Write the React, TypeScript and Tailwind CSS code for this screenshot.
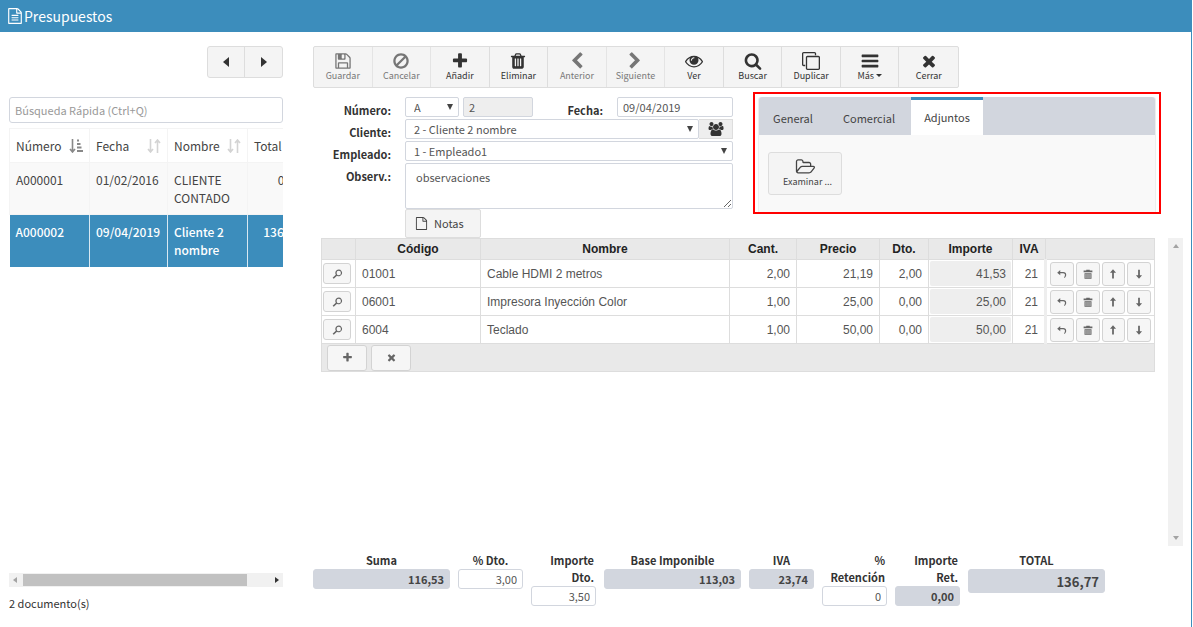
import type { ReactNode } from "react";

const paths = {
  save: "M512 1536h768v-384h-768v384zm896 0h128v-896q0-14-10-38.500t-20-34.500l-281-281q-10-10-34-20t-39-10v416q0 40-28 68t-68 28h-576q-40 0-68-28t-28-68v-416h-128v1280h128v-416q0-40 28-68t68-28h832q40 0 68 28t28 68v416zm-384-928v-320q0-13-9.500-22.500t-22.500-9.500h-192q-13 0-22.500 9.500t-9.500 22.500v320q0 13 9.500 22.500t22.500 9.500h192q13 0 22.500-9.500t9.500-22.500zm640 32v928q0 40-28 68t-68 28h-1344q-40 0-68-28t-28-68v-1344q0-40 28-68t68-28h928q40 0 88 20t76 48l280 280q28 28 48 76t20 88z",
  ban: "M1440 893q0-161-87-295l-754 753q137 89 297 89 111 0 211.500-43.500t173.500-116.500 116-174.500 43-212.500zm-999 299l755-754q-135-91-300-91-148 0-273 73t-198 199-73 274q0 162 89 299zm1223-299q0 157-61 300t-163.500 246-245 164-298.500 61-298.500-61-245-164-163.500-246-61-300 61-299.500 163.500-245.500 245-164 298.500-61 298.500 61 245 164 163.500 245.500 61 299.500z",
  plus: "M1600 736v192q0 40-28 68t-68 28h-416v416q0 40-28 68t-68 28h-192q-40 0-68-28t-28-68v-416h-416q-40 0-68-28t-28-68v-192q0-40 28-68t68-28h416v-416q0-40 28-68t68-28h192q40 0 68 28t28 68v416h416q40 0 68 28t28 68z",
  trash: "M704 1376v-704q0-14-9-23t-23-9h-64q-14 0-23 9t-9 23v704q0 14 9 23t23 9h64q14 0 23-9t9-23zm256 0v-704q0-14-9-23t-23-9h-64q-14 0-23 9t-9 23v704q0 14 9 23t23 9h64q14 0 23-9t9-23zm256 0v-704q0-14-9-23t-23-9h-64q-14 0-23 9t-9 23v704q0 14 9 23t23 9h64q14 0 23-9t9-23zm-544-992h448l-48-117q-7-9-17-11h-317q-10 2-17 11zm928 32v64q0 14-9 23t-23 9h-96v948q0 83-47 143.500t-113 60.500h-832q-66 0-113-58.500t-47-141.500v-952h-96q-14 0-23-9t-9-23v-64q0-14 9-23t23-9h309l70-167q15-37 54-63t79-26h320q40 0 79 26t54 63l70 167h309q14 0 23 9t9 23z",
  prev: "M1427 301l-531 531 531 531q19 19 19 45t-19 45l-166 166q-19 19-45 19t-45-19l-742-742q-19-19-19-45t19-45l742-742q19-19 45-19t45 19l166 166q19 19 19 45t-19 45z",
  next: "M1363 877l-742 742q-19 19-45 19t-45-19l-166-166q-19-19-19-45t19-45l531-531-531-531q-19-19-19-45t19-45l166-166q19-19 45-19t45 19l742 742q19 19 19 45t-19 45z",
  eye: "M1664 960q-152-236-381-353 61 104 61 225 0 185-131.500 316.500t-316.500 131.500-316.500-131.500-131.500-316.500q0-121 61-225-229 117-381 353 133 205 333.500 326.500t434.500 121.500 434.500-121.500 333.500-326.500zm-720-384q0-20-14-34t-34-14q-125 0-214.500 89.500t-89.500 214.500q0 20 14 34t34 14 34-14 14-34q0-86 61-147t147-61q20 0 34-14t14-34zm848 384q0 34-20 69-140 230-376.500 368.500t-499.500 138.500-499.500-139-376.500-368q-20-35-20-69t20-69q140-229 376.500-368t499.500-139 499.500 139 376.500 368q20 35 20 69z",
  search: "M1216 832q0-185-131.500-316.500t-316.500-131.500-316.500 131.500-131.500 316.500 131.500 316.500 316.500 131.500 316.500-131.500 131.500-316.500zm512 832q0 52-38 90t-90 38q-54 0-90-38l-343-342q-179 124-399 124-143 0-273.500-55.500t-225-150-150-225-55.500-273.500 55.500-273.500 150-225 225-150 273.500-55.500 273.500 55.500 225 150 150 225 55.500 273.500q0 220-124 399l343 343q37 37 37 90z",
  clone: "M1664 1632v-1088q0-13-9.500-22.500t-22.500-9.500h-1088q-13 0-22.500 9.500t-9.500 22.500v1088q0 13 9.500 22.500t22.500 9.500h1088q13 0 22.500-9.500t9.500-22.500zm128-1088v1088q0 66-47 113t-113 47h-1088q-66 0-113-47t-47-113v-1088q0-66 47-113t113-47h1088q66 0 113 47t47 113zm-384-384v160h-128v-160q0-13-9.500-22.500t-22.500-9.500h-1088q-13 0-22.500 9.500t-9.500 22.500v1088q0 13 9.500 22.500t22.500 9.500h160v128h-160q-66 0-113-47t-47-113v-1088q0-66 47-113t113-47h1088q66 0 113 47t47 113z",
  bars: "M1728 1344v128q0 26-19 45t-45 19h-1536q-26 0-45-19t-19-45v-128q0-26 19-45t45-19h1536q26 0 45 19t19 45zm0-512v128q0 26-19 45t-45 19h-1536q-26 0-45-19t-19-45v-128q0-26 19-45t45-19h1536q26 0 45 19t19 45zm0-512v128q0 26-19 45t-45 19h-1536q-26 0-45-19t-19-45v-128q0-26 19-45t45-19h1536q26 0 45 19t19 45z",
  times: "M1490 1322q0 40-28 68l-136 136q-28 28-68 28t-68-28l-294-294-294 294q-28 28-68 28t-68-28l-136-136q-28-28-28-68t28-68l294-294-294-294q-28-28-28-68t28-68l136-136q28-28 68-28t68 28l294 294 294-294q28-28 68-28t68 28l136 136q28 28 28 68t-28 68l-294 294 294 294q28 28 28 68z",
  folder: "M1845 931q0-35-53-35h-1088q-40 0-85.500 21.500t-71.500 52.500l-294 363q-18 24-18 40 0 35 53 35h1088q40 0 86-22t71-53l294-363q18-22 18-39zm-1141-163h768v-160q0-40-28-68t-68-28h-576q-40 0-68-28t-28-68v-64q0-40-28-68t-68-28h-320q-40 0-68 28t-28 68v853l256-315q44-53 116-87.500t140-34.500zm1269 163q0 62-46 120l-295 363q-43 53-116 87.500t-140 34.500h-1088q-92 0-158-66t-66-158v-960q0-92 66-158t158-66h320q92 0 158 66t66 158v32h544q92 0 158 66t66 158v160h192q54 0 99 24.500t67 70.500q15 32 15 68z",
  users: "M657 896q-162 5-265 128h-134q-82 0-138-40.500t-56-118.500q0-353 124-353 6 0 43.500 21t97.500 42.500 119 21.500q67 0 133-23-5 37-5 66 0 159 93 293zm1071 637q0 120-73 189.500t-194 69.500h-874q-121 0-194-69.500t-73-189.500q0-53 3.500-103.500t14-109 26.500-108.500 43-97.500 62-81 85.500-53.500 111.500-20q10 0 43 21.500t73 48 107 48 135 21.500 135-21.500 107-48 73-48 43-21.500q61 0 111.500 20t85.500 53.500 62 81 43 97.500 26.500 108.500 14 109 3.500 103.500zm-1024-1277q0 106-75 181t-181 75-181-75-75-181 75-181 181-75 181 75 75 181zm704 384q0 159-112.500 271.500t-271.500 112.500-271.500-112.500-112.500-271.500 112.500-271.500 271.500-112.500 271.500 112.500 112.500 271.500zm576 225q0 78-56 118.500t-138 40.500h-134q-103-123-265-128 93-134 93-293 0-29-5-66 66 23 133 23 59 0 119-21.500t97.500-42.500 43.500-21q124 0 124 353zm-128-609q0 106-75 181t-181 75-181-75-75-181 75-181 181-75 181 75 75 181z",
  file: "M1596 380q28 28 48 76t20 88v1152q0 40-28 68t-68 28h-1344q-40 0-68-28t-28-68v-1600q0-40 28-68t68-28h896q40 0 88 20t76 48zm-444-244v376h376q-10-29-22-41l-313-313q-12-12-41-22zm384 1528v-1024h-416q-40 0-68-28t-28-68v-416h-768v1536h1280z",
  fileText:
    "M1596 380q28 28 48 76t20 88v1152q0 40-28 68t-68 28h-1344q-40 0-68-28t-28-68v-1600q0-40 28-68t68-28h896q40 0 88 20t76 48zm-444-244v376h376q-10-29-22-41l-313-313q-12-12-41-22zm384 1528v-1024h-416q-40 0-68-28t-28-68v-416h-768v1536h1280zm-1024-864q0-14 9-23t23-9h704q14 0 23 9t9 23v64q0 14-9 23t-23 9h-704q-14 0-23-9t-9-23v-64zm736 224q14 0 23 9t9 23v64q0 14-9 23t-23 9h-704q-14 0-23-9t-9-23v-64q0-14 9-23t23-9h704zm0 256q14 0 23 9t9 23v64q0 14-9 23t-23 9h-704q-14 0-23-9t-9-23v-64q0-14 9-23t23-9h704z",
};

type IconName = keyof typeof paths;

function Icon({ name, className }: { name: IconName; className: string }) {
  const wide = name === "folder" || name === "users";
  return (
    <svg viewBox={wide ? "0 0 2048 1792" : "0 0 1792 1792"} fill="currentColor" className={className} aria-hidden="true">
      <path d={paths[name]} />
    </svg>
  );
}

// Small glyphs of the lines grid, drawn on a 16px box
const gridPaths = {
  lookup: "M10 3a3.800 3.800 0 1 1-2 7L4.300 13.500 3 12.200l3.600-3.400A3.800 3.800 0 0 1 10 3zm0 1.300a2.500 2.500 0 1 0 0 5 2.500 2.500 0 0 0 0-5z",
  undo: "M6 3.500v2.300h3.500c2.200 0 3.300 1.300 3.300 3 0 1.400-.7 2.600-1.800 3.700l-.6-.6c.7-1 1-1.900 1-2.700 0-1.200-.7-2-2-2H6V9.500l-3.500-3z",
  trash: "M6 3h4v1h3v2H3V4h3zM4 7h8v6.500H4zM5.300 8v4.500h.8V8zm2.300 0v4.500h.8V8zm2.300 0v4.500h.8V8z",
  up: "M8 2.500l3.500 4H9V13H7V6.500H4.500z",
  down: "M8 13.500l-3.500-4H7V3h2v6.500h2.500z",
};

function GridButton({ icon, label, className }: { icon: keyof typeof gridPaths; label: string; className: string }) {
  return (
    <button
      type="button"
      aria-label={label}
      className={`flex items-center justify-center rounded-[3px] border border-[#d3d3d3] bg-[#f6f6f6] text-[#666] ${className}`}
    >
      <svg viewBox="0 0 16 16" fill="currentColor" fillRule="evenodd" className="size-[14px]">
        <path d={gridPaths[icon]} />
      </svg>
    </button>
  );
}

function SortIcon({ sorted = false }: { sorted?: boolean }) {
  return (
    <svg viewBox="0 0 14 14" fill="none" stroke="currentColor" className={`size-[14px] ${sorted ? "text-[#888]" : "text-[#d3d3d3]"}`}>
      <path d="M3.500 0v12M1 10l2.500 3L6 10" strokeWidth="1.600" />
      {sorted ? (
        <path d="M8 1.500h2M8 5h3.500M8 8.500h4.500M8 12h6" strokeWidth="2" />
      ) : (
        <path d="M10.500 14V2M8 4l2.500-3L13 4" strokeWidth="1.600" />
      )}
    </svg>
  );
}

const toolbar: { label: string; icon: IconName; disabled?: boolean; menu?: boolean }[] = [
  { label: "Guardar", icon: "save", disabled: true },
  { label: "Cancelar", icon: "ban", disabled: true },
  { label: "Añadir", icon: "plus" },
  { label: "Eliminar", icon: "trash" },
  { label: "Anterior", icon: "prev", disabled: true },
  { label: "Siguiente", icon: "next", disabled: true },
  { label: "Ver", icon: "eye" },
  { label: "Buscar", icon: "search" },
  { label: "Duplicar", icon: "clone" },
  { label: "Más", icon: "bars", menu: true },
  { label: "Cerrar", icon: "times" },
];

const lines = [
  { codigo: "01001", nombre: "Cable HDMI 2 metros", cant: "2,00", precio: "21,19", dto: "2,00", importe: "41,53" },
  { codigo: "06001", nombre: "Impresora Inyección Color", cant: "1,00", precio: "25,00", dto: "0,00", importe: "25,00" },
  { codigo: "6004", nombre: "Teclado", cant: "1,00", precio: "50,00", dto: "0,00", importe: "50,00" },
];

const totals = [
  { id: "suma", label: "Suma", value: "116,53", wide: true, locked: true },
  { id: "pdto", label: "% Dto.", value: "3,00" },
  { id: "idto", label: "Importe Dto.", value: "3,50", wrap: true },
  { id: "base", label: "Base Imponible", value: "113,03", wide: true, locked: true },
  { id: "iva", label: "IVA", value: "23,74", locked: true },
  { id: "pret", label: "% Retención", value: "0", wrap: true },
  { id: "iret", label: "Importe Ret.", value: "0,00", locked: true, wrap: true },
  { id: "total", label: "TOTAL", value: "136,77", wide: true, locked: true, big: true },
];

function Label({ htmlFor, children }: { htmlFor: string; children: ReactNode }) {
  return (
    <label htmlFor={htmlFor} className="h-5 pt-[3px] text-right font-bold leading-5 text-[#333]">
      {children}
    </label>
  );
}

function SelectBox({ id, value, className }: { id: string; value: string; className: string }) {
  return (
    <div className={`relative h-5 ${className}`}>
      <select id={id} className="h-5 w-full appearance-none rounded-[2px] border border-[#d2d6de] bg-white px-2 leading-4">
        <option>{value}</option>
      </select>
      <svg viewBox="0 0 6 6" className="pointer-events-none absolute right-[6px] top-[7px] size-[6px] fill-[#444]">
        <path d="M0 0h6L3 6z" />
      </svg>
    </div>
  );
}

function Sidebar() {
  const cell = "border border-[#f4f4f4] px-[6px] pb-[6px] pt-2";
  const selected = "border-r border-[#d8e8f2] px-[6px] pb-[6px] pt-2";
  return (
    <aside className="flex w-[274px] shrink-0 flex-col">
      <div className="flex self-end rounded-[3px] border border-[#ddd] bg-[#f4f4f4]">
        <button type="button" aria-label="Página anterior" className="flex h-[30px] w-[37px] items-center justify-center border-r border-[#ddd]">
          <svg viewBox="0 0 6 10" className="h-[10px] w-[6px] fill-[#333]"><path d="M6 0v10L0 5z" /></svg>
        </button>
        <button type="button" aria-label="Página siguiente" className="flex h-[30px] w-[37px] items-center justify-center">
          <svg viewBox="0 0 6 10" className="h-[10px] w-[6px] fill-[#333]"><path d="M0 0v10l6-5z" /></svg>
        </button>
      </div>

      <input
        type="text"
        aria-label="Búsqueda Rápida"
        placeholder="Búsqueda Rápida (Ctrl+Q)"
        className="mt-[19px] h-[26px] rounded-[3px] border border-[#d2d6de] px-[5px] placeholder:text-[#999]"
      />

      <div className="mt-[5px] overflow-hidden">
        <table className="w-[299px] table-fixed border-collapse text-[12px] text-[#444]">
          <colgroup>
            <col className="w-[80px]" />
            <col className="w-[78px]" />
            <col className="w-[80px]" />
            <col />
          </colgroup>
          <thead>
            <tr className="h-[34px] text-left">
              {["Número", "Fecha", "Nombre"].map((h, i) => (
                <th key={h} className="border border-[#f4f4f4] px-[6px] font-normal">
                  <span className="flex items-center justify-between">
                    {h}
                    <SortIcon sorted={i === 0} />
                  </span>
                </th>
              ))}
              <th className="border border-[#f4f4f4] px-[6px] font-normal">Total</th>
            </tr>
          </thead>
          <tbody className="align-top leading-[18px]">
            <tr className="h-[52px] bg-[#f9f9f9]">
              <td className={cell}>A000001</td>
              <td className={cell}>01/02/2016</td>
              <td className={cell}>CLIENTE CONTADO</td>
              <td className={`${cell} text-right`}>0,00</td>
            </tr>
            <tr className="h-[52px] bg-[#3c8dbc] font-medium text-white">
              <td className={selected}>A000002</td>
              <td className={selected}>09/04/2019</td>
              <td className={selected}>Cliente 2 nombre</td>
              <td className={`${selected} text-right`}>136,77</td>
            </tr>
          </tbody>
        </table>
      </div>

      <div className="mt-auto flex h-[14px] items-center bg-[#f1f1f1] px-1">
        <svg viewBox="0 0 4 6" className="h-[6px] w-1 fill-[#a3a3a3]"><path d="M4 0v6L0 3z" /></svg>
        <div className="ml-[6px] h-3 w-[224px] bg-[#c1c1c1]" />
        <svg viewBox="0 0 4 6" className="ml-auto h-[6px] w-1 fill-[#333]"><path d="M0 0v6l4-3z" /></svg>
      </div>
      <p className="mt-1 leading-6 text-[#333]">2 documento(s)</p>
    </aside>
  );
}

function HeaderForm() {
  const field = "h-5 rounded-[2px] border border-[#d2d6de]";
  return (
    <div className="mt-[9px] grid w-[420px] shrink-0 grid-cols-[78px_1fr] gap-x-[14px] gap-y-[2px] text-[#555]">
      <Label htmlFor="numero">Número:</Label>
      <div className="flex gap-1">
        <SelectBox id="serie" value="A" className="w-[54px]" />
        <input id="numero" readOnly defaultValue="2" className={`${field} w-[70px] bg-[#eee] px-[5px]`} />
        <div className="flex flex-1 justify-end gap-[14px]">
          <Label htmlFor="fecha">Fecha:</Label>
          <input id="fecha" defaultValue="09/04/2019" className={`${field} w-[116px] px-[5px]`} />
        </div>
      </div>

      <Label htmlFor="cliente">Cliente:</Label>
      <div className="flex">
        <SelectBox id="cliente" value="2 - Cliente 2 nombre" className="flex-1" />
        <button type="button" aria-label="Clientes" className="flex w-[34px] items-center justify-center border border-l-0 border-[#ddd] bg-[#eee] text-[#333]">
          <Icon name="users" className="h-[14px] w-4" />
        </button>
      </div>

      <Label htmlFor="empleado">Empleado:</Label>
      <SelectBox id="empleado" value="1 - Empleado1" className="w-full" />

      <Label htmlFor="observ">Observ.:</Label>
      <div className="flex flex-col items-start">
        <textarea id="observ" defaultValue="observaciones" className="block h-[46px] w-full rounded-[2px] border border-[#d2d6de] px-[10px] py-1 leading-[18px]" />
        <button type="button" className="flex h-[29px] w-[76px] items-center gap-[6px] rounded-[2px] border border-[#ddd] bg-[#f4f4f4] pl-[9px] text-[#444]">
          <Icon name="file" className="size-[13px]" />
          Notas
        </button>
      </div>
    </div>
  );
}

function AttachmentsPanel() {
  const tab = "h-[37px] pt-[5px] text-[#444]";
  return (
    <section className="mr-[22px] mt-1 h-[122px] flex-1 border-2 border-[#f00] px-[3px] pt-[3px]">
      <div className="h-full rounded-t-[3px] border-x border-[#eee] bg-[#f9f9f9]">
        <div role="tablist" className="flex rounded-t-[3px] bg-[#d2d6de]">
          <button type="button" role="tab" className={`${tab} w-[68px]`}>General</button>
          <button type="button" role="tab" className={`${tab} w-[84px]`}>Comercial</button>
          <button type="button" role="tab" aria-selected="true" className="h-[38px] w-[72px] border-t-[3px] border-[#3c8dbc] bg-white text-[#444]">
            Adjuntos
          </button>
        </div>
        <button type="button" className="ml-[9px] mt-[17px] flex h-[43px] w-[74px] flex-col items-center rounded-[3px] border border-[#ddd] bg-[#f4f4f4] pt-[5px] text-[9px] text-[#444]">
          <Icon name="folder" className="h-[18px] w-[21px]" />
          <span className="pl-[5px] leading-[11px]">Examinar ...</span>
        </button>
      </div>
    </section>
  );
}

function LinesTable() {
  const th = "border border-[#ddd] font-bold";
  const td = "border border-[#ddd] px-[6px]";
  return (
    <div className="flex flex-1 gap-[13px] pl-2">
      <div className="flex-1 font-['Liberation_Sans',Arial,sans-serif] text-[12px] text-[#555]">
        <table className="w-full table-fixed border-collapse">
          <colgroup>
            <col className="w-[34px]" />
            <col className="w-[125px]" />
            <col />
            <col className="w-[67px]" />
            <col className="w-[83px]" />
            <col className="w-[49px]" />
            <col className="w-[84px]" />
            <col className="w-[33px]" />
            <col className="w-[109px]" />
          </colgroup>
          <thead>
            <tr className="h-[21px] bg-[#e9e9e9] text-[#222]">
              <th className={th}></th>
              <th className={th}>Código</th>
              <th className={th}>Nombre</th>
              <th className={th}>Cant.</th>
              <th className={th}>Precio</th>
              <th className={th}>Dto.</th>
              <th className={th}>Importe</th>
              <th className={th}>IVA</th>
              <th className={th}></th>
            </tr>
          </thead>
          <tbody>
            {lines.map((line) => (
              <tr key={line.codigo} className="h-7">
                <td className="border border-[#ddd] px-px">
                  <GridButton icon="lookup" label="Buscar artículo" className="h-[21px] w-7" />
                </td>
                <td className={td}>{line.codigo}</td>
                <td className={td}>{line.nombre}</td>
                <td className={`${td} text-right`}>{line.cant}</td>
                <td className={`${td} text-right`}>{line.precio}</td>
                <td className={`${td} text-right`}>{line.dto}</td>
                <td className="border border-[#ddd] p-px text-right">
                  <div className="rounded-[2px] bg-[#eee] px-[5px] pt-px leading-6">{line.importe}</div>
                </td>
                <td className={`${td} text-right`}>21</td>
                <td className="border border-[#ddd] border-l-[3px] border-l-[#eee] px-[3px]">
                  <div className="flex gap-[2px]">
                    <GridButton icon="undo" label="Deshacer" className="h-6 w-6" />
                    <GridButton icon="trash" label="Eliminar línea" className="h-6 w-6" />
                    <GridButton icon="up" label="Subir" className="h-6 w-6" />
                    <GridButton icon="down" label="Bajar" className="h-6 w-6" />
                  </div>
                </td>
              </tr>
            ))}
          </tbody>
        </table>
        <div className="flex h-[28px] items-center gap-1 border border-t-0 border-[#ddd] bg-[#e9e9e9] px-[5px]">
          {(["plus", "times"] as IconName[]).map((icon) => (
            <button
              key={icon}
              type="button"
              aria-label={icon === "plus" ? "Añadir línea" : "Quitar línea"}
              className="flex h-[26px] w-10 items-center justify-center rounded-[3px] border border-[#d3d3d3] bg-[#f6f6f6] text-[#666]"
            >
              <Icon name={icon} className="size-[11px]" />
            </button>
          ))}
        </div>
      </div>

      <div className="flex w-[15px] flex-col items-center justify-between bg-[#f1f1f1] py-[6px]">
        <svg viewBox="0 0 6 4" className="h-1 w-[6px] fill-[#a3a3a3]"><path d="M0 4h6L3 0z" /></svg>
        <svg viewBox="0 0 6 4" className="h-1 w-[6px] fill-[#a3a3a3]"><path d="M0 0h6L3 4z" /></svg>
      </div>
    </div>
  );
}

function Totals() {
  return (
    <div className="mt-[6px] flex h-[75px] items-start gap-2">
      {totals.map((t) => (
        <div key={t.id} className={`flex flex-col ${t.wide ? "w-[137px]" : "w-[65px]"}`}>
          <label htmlFor={t.id} className={`font-bold leading-[17px] text-[#333] ${t.wrap ? "pl-2 pr-[2px] text-right" : "text-center"}`}>
            {t.label}
          </label>
          <input
            id={t.id}
            readOnly={t.locked}
            defaultValue={t.value}
            className={`w-full rounded-[3px] border border-[#d2d6de] px-[5px] text-right ${t.big ? "h-6 text-[13px]" : "h-5"} ${t.locked ? "bg-[#d2d6de] font-bold text-[#444]" : "text-[#555]"}`}
          />
        </div>
      ))}
    </div>
  );
}

export default function App() {
  return (
    <div className="mr-px flex min-h-screen flex-col border-r border-[#3c8dbc] bg-white font-['Noto_Sans_CJK_SC','Open_Sans',sans-serif] text-[11px]">
      <header className="flex h-8 items-center gap-px bg-[#3c8dbc] px-[7px] text-white">
        <Icon name="fileText" className="size-4" />
        <h1 className="text-[14px]">Presupuestos</h1>
      </header>

      <div className="flex flex-1 pl-[9px] pr-2 pt-[14px]">
        <div className="flex pb-3">
          <Sidebar />
        </div>

        <main className="ml-[30px] flex flex-1 flex-col">
          <div className="grid w-[646px] grid-cols-11 divide-x divide-[#ddd] rounded-[2px] border border-[#ddd] bg-[#f4f4f4]">
            {toolbar.map((item) => (
              <button
                key={item.label}
                type="button"
                disabled={item.disabled}
                className={`flex h-[40px] flex-col items-center pt-[5px] text-[9px] text-[#333] ${item.disabled ? "opacity-65" : ""}`}
              >
                <Icon name={item.icon} className="size-[18px]" />
                <span className="flex items-center gap-[2px] leading-[11px]">
                  {item.label}
                  {item.menu && <svg viewBox="0 0 6 3" className="h-[3px] w-[6px] fill-current"><path d="M0 0h6L3 3z" /></svg>}
                </span>
              </button>
            ))}
          </div>

          <div className="flex items-start gap-5">
            <HeaderForm />
            <AttachmentsPanel />
          </div>

          <LinesTable />
          <Totals />
        </main>
      </div>
    </div>
  );
}
